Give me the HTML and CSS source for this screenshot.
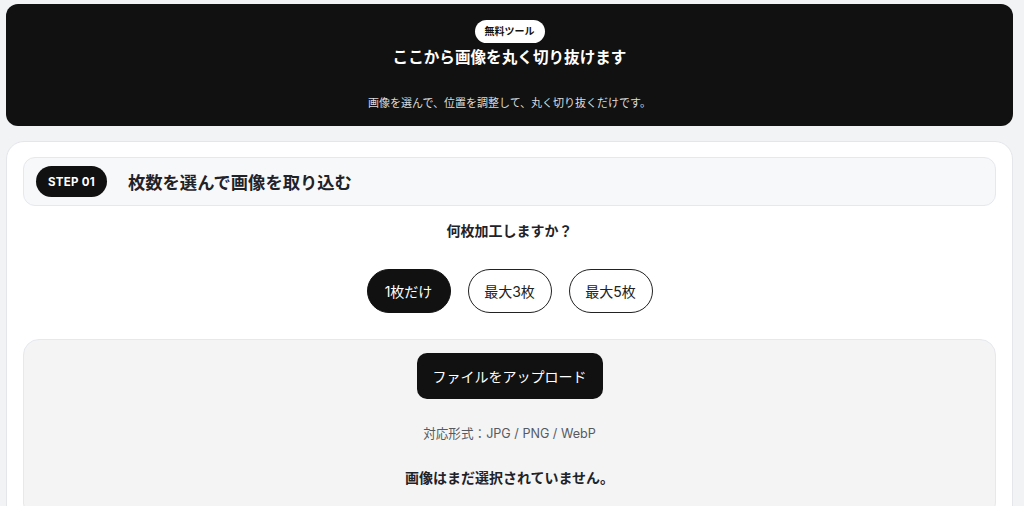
FILE: index.html
```html
<!DOCTYPE html>
<html lang="ja">
<head>
<meta charset="utf-8">
<title>丸く切り抜き</title>
<link rel="stylesheet" href="styles.css">
</head>
<body>
<div class="page">
  <header class="hero">
    <span class="badge">無料ツール</span>
    <h1 class="hero-title">ここから画像を丸く切り抜けます</h1>
    <p class="hero-sub">画像を選んで、位置を調整して、丸く切り抜くだけです。</p>
  </header>
  <main class="card">
    <div class="step-head">
      <span class="step-pill">STEP 01</span>
      <h2 class="step-title">枚数を選んで画像を取り込む</h2>
    </div>
    <p class="question">何枚加工しますか？</p>
    <div class="choices">
      <button class="choice active">1枚だけ</button>
      <button class="choice">最大3枚</button>
      <button class="choice">最大5枚</button>
    </div>
    <section class="upload">
      <button class="upload-btn">ファイルをアップロード</button>
      <p class="formats">対応形式：JPG / PNG / WebP</p>
      <p class="empty">画像はまだ選択されていません。</p>
    </section>
  </main>
</div>
</body>
</html>
```

FILE: styles.css
```css
* { box-sizing: border-box; }
html, body { margin: 0; padding: 0; }
body {
  background: #f2f3f5;
  font-family: "Inter", "Noto Sans CJK JP", "Noto Sans", sans-serif;
  color: #1f2329;
  height: 506px;
  overflow: hidden;
}
.page {
  padding: 4px 11px 0 6px;
  display: flex;
  flex-direction: column;
  gap: 15px;
}
.hero {
  background: #111111;
  border-radius: 12px;
  text-align: center;
  padding: 15px 0 15px;
  color: #fff;
}
.badge {
  display: inline-block;
  background: #fff;
  color: #111;
  font-size: 10px;
  font-weight: 700;
  height: 23px;
  line-height: 23px;
  padding: 0 10px;
  border-radius: 12px;
}
.hero-title {
  margin: 3px 0 0;
  font-size: 15.6px;
  line-height: 24px;
  font-weight: 700;
}
.hero-sub {
  margin: 25px 0 0;
  font-size: 11px;
  line-height: 16px;
  color: #dcdcdc;
}
.card {
  background: #fff;
  border: 1px solid #e4e6ea;
  border-radius: 18px;
  padding: 15px 16px 40px;
}
.step-head {
  display: flex;
  align-items: center;
  gap: 21px;
  height: 49px;
  padding: 0 12px;
  background: #f7f8fa;
  border: 1px solid #e6e8ec;
  border-radius: 12px;
}
.step-pill {
  display: inline-flex;
  align-items: center;
  justify-content: center;
  width: 71px;
  height: 31px;
  background: #111;
  color: #fff;
  font-size: 11.5px;
  font-weight: 700;
  border-radius: 16px;
  letter-spacing: 0.3px;
}
.step-title {
  margin: 0;
  font-size: 17.3px;
  font-weight: 700;
  color: #1f2329;
}
.question {
  margin: 15px 0 0;
  text-align: center;
  font-size: 14px;
  line-height: 20px;
  font-weight: 700;
  color: #1f2329;
}
.choices {
  display: flex;
  justify-content: center;
  gap: 17px;
  margin-top: 28px;
}
.choice {
  width: 84px;
  height: 44px;
  border-radius: 22px;
  border: 1px solid #222;
  background: #fff;
  color: #222;
  font-family: inherit;
  font-size: 14px;
  padding: 0;
}
.choice.active {
  background: #111;
  border-color: #111;
  color: #fff;
}
.upload {
  margin-top: 26px;
  background: #f4f4f5;
  border: 1px solid #e6e8ec;
  border-radius: 16px;
  padding: 13px 0 30px;
  text-align: center;
}
.upload-btn {
  width: 186px;
  height: 46px;
  border: none;
  border-radius: 10px;
  background: #111;
  color: #fff;
  font-family: inherit;
  font-size: 14px;
  padding: 0;
}
.formats {
  margin: 26px 0 0;
  font-size: 12.6px;
  line-height: 18px;
  color: #555a61;
}
.empty {
  margin: 25px 0 0;
  font-size: 14px;
  line-height: 20px;
  font-weight: 700;
  color: #1f2329;
}
```
